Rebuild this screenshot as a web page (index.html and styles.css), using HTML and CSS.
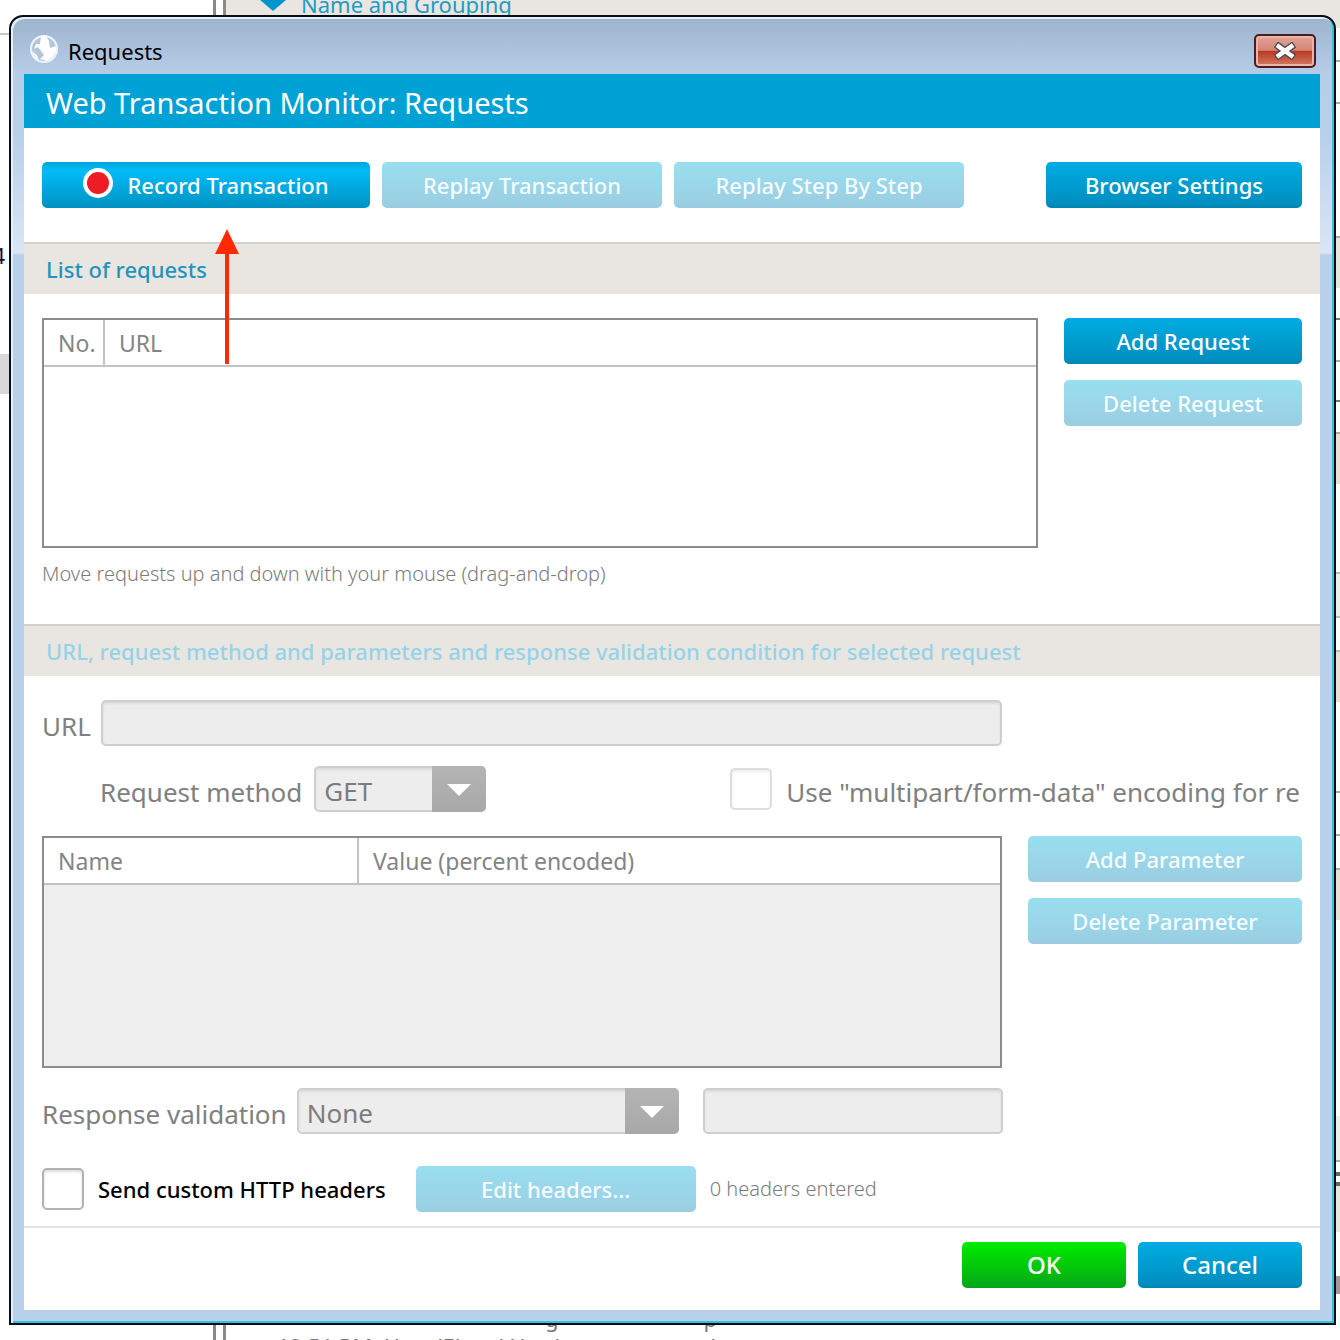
FILE: index.html
```html
<!DOCTYPE html>
<html lang="en">
<head>
<meta charset="utf-8">
<title>Requests</title>
<link rel="stylesheet" href="styles.css">
</head>
<body>
<div class="desktop">
  <div class="backdrop" aria-hidden="true">
    <div class="pane-left">
      <span class="left-rule"></span>
      <span class="left-count">4</span>
      <span class="left-block"></span>
    </div>
    <div class="pane-right">
      <div class="group-head"><span class="group-arrow"></span>Name and Grouping</div>
      <div class="log-text">
        <div class="log-upper"><span>g</span><span>p</span></div>
        <div>12:51 PM, Host 'Elena' Hardware now used</div>
      </div>
    </div>
    <div class="pane-edge"></div>
  </div>

  <section class="window" aria-label="Requests">
    <header class="titlebar">
      <svg class="globe" viewBox="0 0 32 32" aria-hidden="true">
        <circle cx="16" cy="16" r="13" fill="#b3c5da" stroke="#eef4fb" stroke-width="2"/>
        <path d="M13 3 L18 3 L21 8 L22 15 L28 13 L28 19 L24 25 L19 28 L12 26 L16 22 L13 18 L10 14 L6 16 L8 11 L12 11 Z" fill="#fff"/>
        <path d="M4 18 L9 22 L11 27 L6 24 Z" fill="#f4f8fd"/>
      </svg>
      <span class="title">Requests</span>
      <button class="close" type="button" aria-label="Close">
        <svg viewBox="0 0 24 20" aria-hidden="true">
          <path d="M5 5 L19 15 M19 5 L5 15" fill="none" stroke="#4b4a52" stroke-width="8" stroke-linecap="square"/>
          <path d="M5 5 L19 15 M19 5 L5 15" fill="none" stroke="#fff" stroke-width="5" stroke-linecap="square"/>
        </svg>
      </button>
    </header>

    <main class="client">
      <h1 class="banner">Web Transaction Monitor: Requests</h1>

      <div class="toolbar">
        <button class="btn record" type="button"><span class="dot"></span>Record Transaction</button>
        <button class="btn replay" type="button" disabled>Replay Transaction</button>
        <button class="btn step" type="button" disabled>Replay Step By Step</button>
        <button class="btn browser" type="button">Browser Settings</button>
        <svg class="pointer" viewBox="0 0 24 136" aria-hidden="true">
          <path d="M12 0 L24 25 H14 V135 H10 V25 H0 Z" fill="#ff2a00"/>
        </svg>
      </div>

      <h2 class="section">List of requests</h2>
      <div class="list-area">
        <div class="list-row">
          <div class="grid-box requests">
            <table>
              <thead><tr><th class="col-no">No.</th><th>URL</th></tr></thead>
            </table>
          </div>
          <div class="side side-requests">
            <button class="btn" type="button">Add Request</button>
            <button class="btn" type="button" disabled>Delete Request</button>
          </div>
        </div>
        <p class="hint">Move requests up and down with your mouse (drag-and-drop)</p>
      </div>

      <h2 class="section muted">URL, request method and parameters and response validation condition for selected request</h2>
      <form class="details">
        <div class="row url-row">
          <label for="url">URL</label>
          <input class="field" id="url" type="text" disabled>
        </div>
        <div class="row method-row">
          <label for="method">Request method</label>
          <span class="select method">
            <select id="method" disabled><option>GET</option></select>
          </span>
          <div class="multipart">
            <input class="tick" id="multipart" type="checkbox" disabled>
            <label for="multipart">Use "multipart/form-data" encoding for re</label>
          </div>
        </div>
        <div class="list-row params-row">
          <div class="grid-box params">
            <table>
              <thead><tr><th class="col-name">Name</th><th>Value (percent encoded)</th></tr></thead>
            </table>
          </div>
          <div class="side side-params">
            <button class="btn" type="button" disabled>Add Parameter</button>
            <button class="btn" type="button" disabled>Delete Parameter</button>
          </div>
        </div>
        <div class="row validation-row">
          <label for="validation">Response validation</label>
          <span class="select validation">
            <select id="validation" disabled><option>None</option></select>
          </span>
          <input class="field condition" type="text" aria-label="Validation text" disabled>
        </div>
        <div class="row headers-row">
          <input class="tick" id="headers" type="checkbox">
          <label for="headers">Send custom HTTP headers</label>
          <button class="btn edit" type="button" disabled>Edit headers...</button>
          <span class="hint">0 headers entered</span>
        </div>
      </form>

      <footer class="actions">
        <button class="btn ok" type="button">OK</button>
        <button class="btn" type="button">Cancel</button>
      </footer>
    </main>
  </section>
</div>
</body>
</html>
```
FILE: styles.css
```css
* { box-sizing: border-box; }

body {
  margin: 0;
  background: #fff;
  color: #000;
  font-family: "Noto Sans", "Open Sans", sans-serif;
  font-size: 22px;
  line-height: 32px;
}

button, input, select { font: inherit; }

/* Both layers share one grid cell, the window lying over the page behind it. */
.desktop {
  display: grid;
  grid-template-columns: minmax(0, 1fr);
  min-height: 100vh;
}
.backdrop, .window { grid-area: 1 / 1; }

.backdrop {
  display: flex;
  overflow: hidden;
}
.pane-left {
  width: 216px;
  border-right: 3px solid #8a8a8a;
  display: flex;
  flex-direction: column;
  align-items: flex-start;
  flex-shrink: 0;
}
.left-rule { width: 100%; height: 35px; border-bottom: 2px solid #c6c6c6; }
.left-count {
  margin-top: 204px;
  width: 5px;
  display: flex;
  justify-content: flex-end;
  color: #14123c;
}
.left-block { margin-top: 83px; width: 100%; height: 40px; background: #d8d8d8; }
.pane-right {
  flex: 1;
  margin-left: 7px;
  border-left: 3px solid #8a8a8a;
  display: flex;
  flex-direction: column;
  justify-content: space-between;
  min-width: 0;
}
.group-head {
  height: 28px;
  padding-left: 34px;
  display: flex;
  align-items: flex-start;
  gap: 15px;
  background: #e9e5e1;
  color: #1f9bc4;
  line-height: 8px;
}
.group-arrow {
  border: 13px solid transparent;
  border-top: 11px solid #0096cc;
  border-bottom: 0;
}
.log-text {
  height: 36px;
  padding-left: 51px;
  color: #777;
  line-height: 28px;
  white-space: nowrap;
  overflow: hidden;
}
.log-upper { display: flex; gap: 145px; padding-left: 268px; }
.pane-edge {
  width: 6px;
  background: linear-gradient(#e9e5e1 28px, #fff 28px 60px, #aaa 60px 62px, #fff 62px 102px, #aaa 102px 104px, #fff 104px 236px, #aaa 236px 238px, #e9e5e1 238px 288px, #fff 288px 318px, #777 318px 320px, #fff 320px 360px, #aaa 360px 362px, #fff 362px 400px, #777 400px 402px, #fff 402px 432px, #aaa 432px 434px, #ecdfd8 434px 484px, #fff 484px 572px, #bbb 572px 574px, #eee 574px 616px, #bbb 616px 618px, #fff 618px 650px, #bbb 650px 652px, #ecdfd8 652px 702px, #fff 702px 791px, #aaa 791px 793px, #fff 793px 834px, #aaa 834px 836px, #fff 836px 868px, #aaa 868px 870px, #ecdfd8 870px 920px, #fff 920px 1116px, #eee 1116px 1160px, #aaa 1160px 1162px, #fff 1162px 1172px, #666 1172px 1176px, #fff 1176px 1182px, #666 1182px 1186px, #ece5e1 1186px 1232px, #fff 1232px 1276px, #a9959f 1276px 1294px, #fff 1294px);
}

.window {
  align-self: start;
  margin: 15px 4px 14px 9px;
  padding: 0 14px 13px 13px;
  border: 2px solid #0b0d12;
  border-radius: 14px 14px 0 0;
  background: linear-gradient(#9db4cd, #b8cde8 58px, #b9d0ea 120px, #d9e6f5 236px, #b9d0ea 238px);
  box-shadow: inset 2px 2px #e3f1fb, inset -2px -2px #2fc3dd;
}

.titlebar {
  height: 57px;
  padding: 0 4px;
  display: flex;
  align-items: center;
  gap: 8px;
}
.globe { width: 32px; height: 32px; margin-top: 6px; }
.title { padding-top: 10px; flex: 1; line-height: 32px; }
.close {
  width: 62px;
  height: 34px;
  margin-top: 11px;
  padding: 0;
  display: flex;
  align-items: center;
  justify-content: center;
  border: 2px solid #4a1d22;
  border-radius: 5px;
  box-shadow: inset 0 0 0 2px #eab4aa;
  background: linear-gradient(#e2a498, #d58375 48%, #b6391f 50%, #d77a66);
}
.close svg { width: 22px; height: 18px; }

.client { background: #fff; }

.banner {
  margin: 0;
  height: 54px;
  padding: 0 22px;
  background: #00a2d6;
  color: #fff;
  font-size: 29px;
  font-weight: 400;
  line-height: 58px;
}

.btn {
  height: 46px;
  padding: 0 12px;
  border: 0;
  border-radius: 5px;
  background: linear-gradient(#00ace2, #008fc0 90%, #0084ae);
  color: #fff;
  font-weight: 500;
  white-space: nowrap;
}
.btn:disabled { background: linear-gradient(#98dff0, #9bcde2); color: #f6fcfe; }

.toolbar {
  position: relative;
  padding: 34px 18px;
  display: flex;
  gap: 12px;
}
.record {
  width: 328px;
  display: flex;
  align-items: center;
  justify-content: center;
  gap: 14px;
  background: linear-gradient(#00a6dc, #00bcf8 20%, #00a4d8 65%, #0092c2);
}
.dot {
  width: 30px;
  height: 30px;
  margin-bottom: 4px;
  border: 4px solid #fff;
  border-radius: 50%;
  background: #ee1c24;
}
.replay { width: 280px; }
.step { width: 290px; }
.browser { width: 256px; margin-left: auto; }
.pointer {
  position: absolute;
  left: 191px;
  top: 101px;
  width: 24px;
  height: 136px;
  z-index: 1;
}

.section {
  margin: 0;
  height: 52px;
  padding: 0 22px;
  border-top: 2px solid #d2d0ce;
  background: #e9e6e1;
  color: #1f95bd;
  font-size: 22px;
  font-weight: 500;
  line-height: 50px;
  white-space: nowrap;
  overflow: hidden;
}
.muted { color: #96d3e8; }

.list-area { padding: 24px 18px 34px; }
.list-row { display: flex; gap: 26px; }
.grid-box {
  flex: 1;
  height: 230px;
  border: 2px solid #8c8c8c;
}
.params { height: 232px; background: #efefef; }
table {
  width: 100%;
  border-collapse: collapse;
  table-layout: fixed;
  background: #fff;
}
th {
  height: 46px;
  padding: 0 14px;
  border-bottom: 2px solid #c2c2c2;
  color: #848484;
  font-size: 23px;
  font-weight: 400;
  text-align: left;
  white-space: nowrap;
}
th + th { border-left: 2px solid #c2c2c2; }
.col-no { width: 60px; padding-right: 0; }
.col-name { width: 314px; }

.side { display: flex; flex-direction: column; gap: 16px; }
.side-requests { width: 238px; }
.side-params { width: 274px; }

.hint { margin: 0; color: #7c7c7c; font-size: 20px; font-weight: 300; }
.list-area .hint { padding-top: 10px; }

.details { padding: 24px 18px 14px; }
.row { display: flex; align-items: center; color: #808080; }
.row label { padding-top: 6px; font-size: 26px; white-space: nowrap; }
.field {
  height: 46px;
  border: 2px solid #cfcfcf;
  border-radius: 5px;
  background: #ededed;
  box-shadow: inset 0 2px 2px #dcdcdc;
}
.url-row { gap: 10px; padding-right: 300px; }
.url-row .field { flex: 1; min-width: 0; }
.method-row { padding: 20px 0 24px 58px; gap: 12px; }
.select { position: relative; display: flex; flex-shrink: 0; }
.select::before {
  content: "";
  position: absolute;
  right: 0;
  width: 54px;
  height: 46px;
  border-radius: 0 5px 5px 0;
  background: linear-gradient(#b4b4b4, #a8a8a8);
}
.select::after {
  content: "";
  position: absolute;
  right: 15px;
  top: 18px;
  border: 12px solid transparent;
  border-top-color: #fff;
  border-bottom: 0;
}
select {
  width: 100%;
  height: 46px;
  padding: 4px 8px 0;
  appearance: none;
  border: 2px solid #cfcfcf;
  border-radius: 5px;
  background: #ededed;
  box-shadow: inset 0 2px 2px #dcdcdc;
  color: #7c7c7c;
  font-size: 26px;
  opacity: 1;
}
.method { width: 172px; }
.multipart {
  flex: 1;
  min-width: 0;
  margin-left: 232px;
  display: flex;
  align-items: center;
  gap: 14px;
  overflow: hidden;
}
.tick {
  width: 42px;
  height: 42px;
  margin: 0;
  flex-shrink: 0;
  appearance: none;
  border: 2px solid #b2b2b2;
  border-radius: 5px;
  background: #fff;
  box-shadow: inset 0 2px 3px #ddd;
}
.tick:disabled { border-color: #dedede; box-shadow: inset 0 2px 3px #eee; }

.validation-row { padding-top: 20px; gap: 10px; }
.validation { width: 382px; }
.condition { width: 300px; margin-left: 14px; }

.headers-row { padding-top: 32px; gap: 14px; }
.headers-row label { padding: 0; color: #000; font-size: 22px; font-weight: 500; }
.edit { width: 280px; margin-left: 16px; }

.actions {
  padding: 14px 18px 22px;
  display: flex;
  justify-content: flex-end;
  gap: 12px;
  border-top: 2px solid #e2e2e2;
}
.actions .btn { width: 164px; font-size: 24px; }
.ok { background: linear-gradient(#00ec00, #04c30c 60%, #06a51a); }
```
